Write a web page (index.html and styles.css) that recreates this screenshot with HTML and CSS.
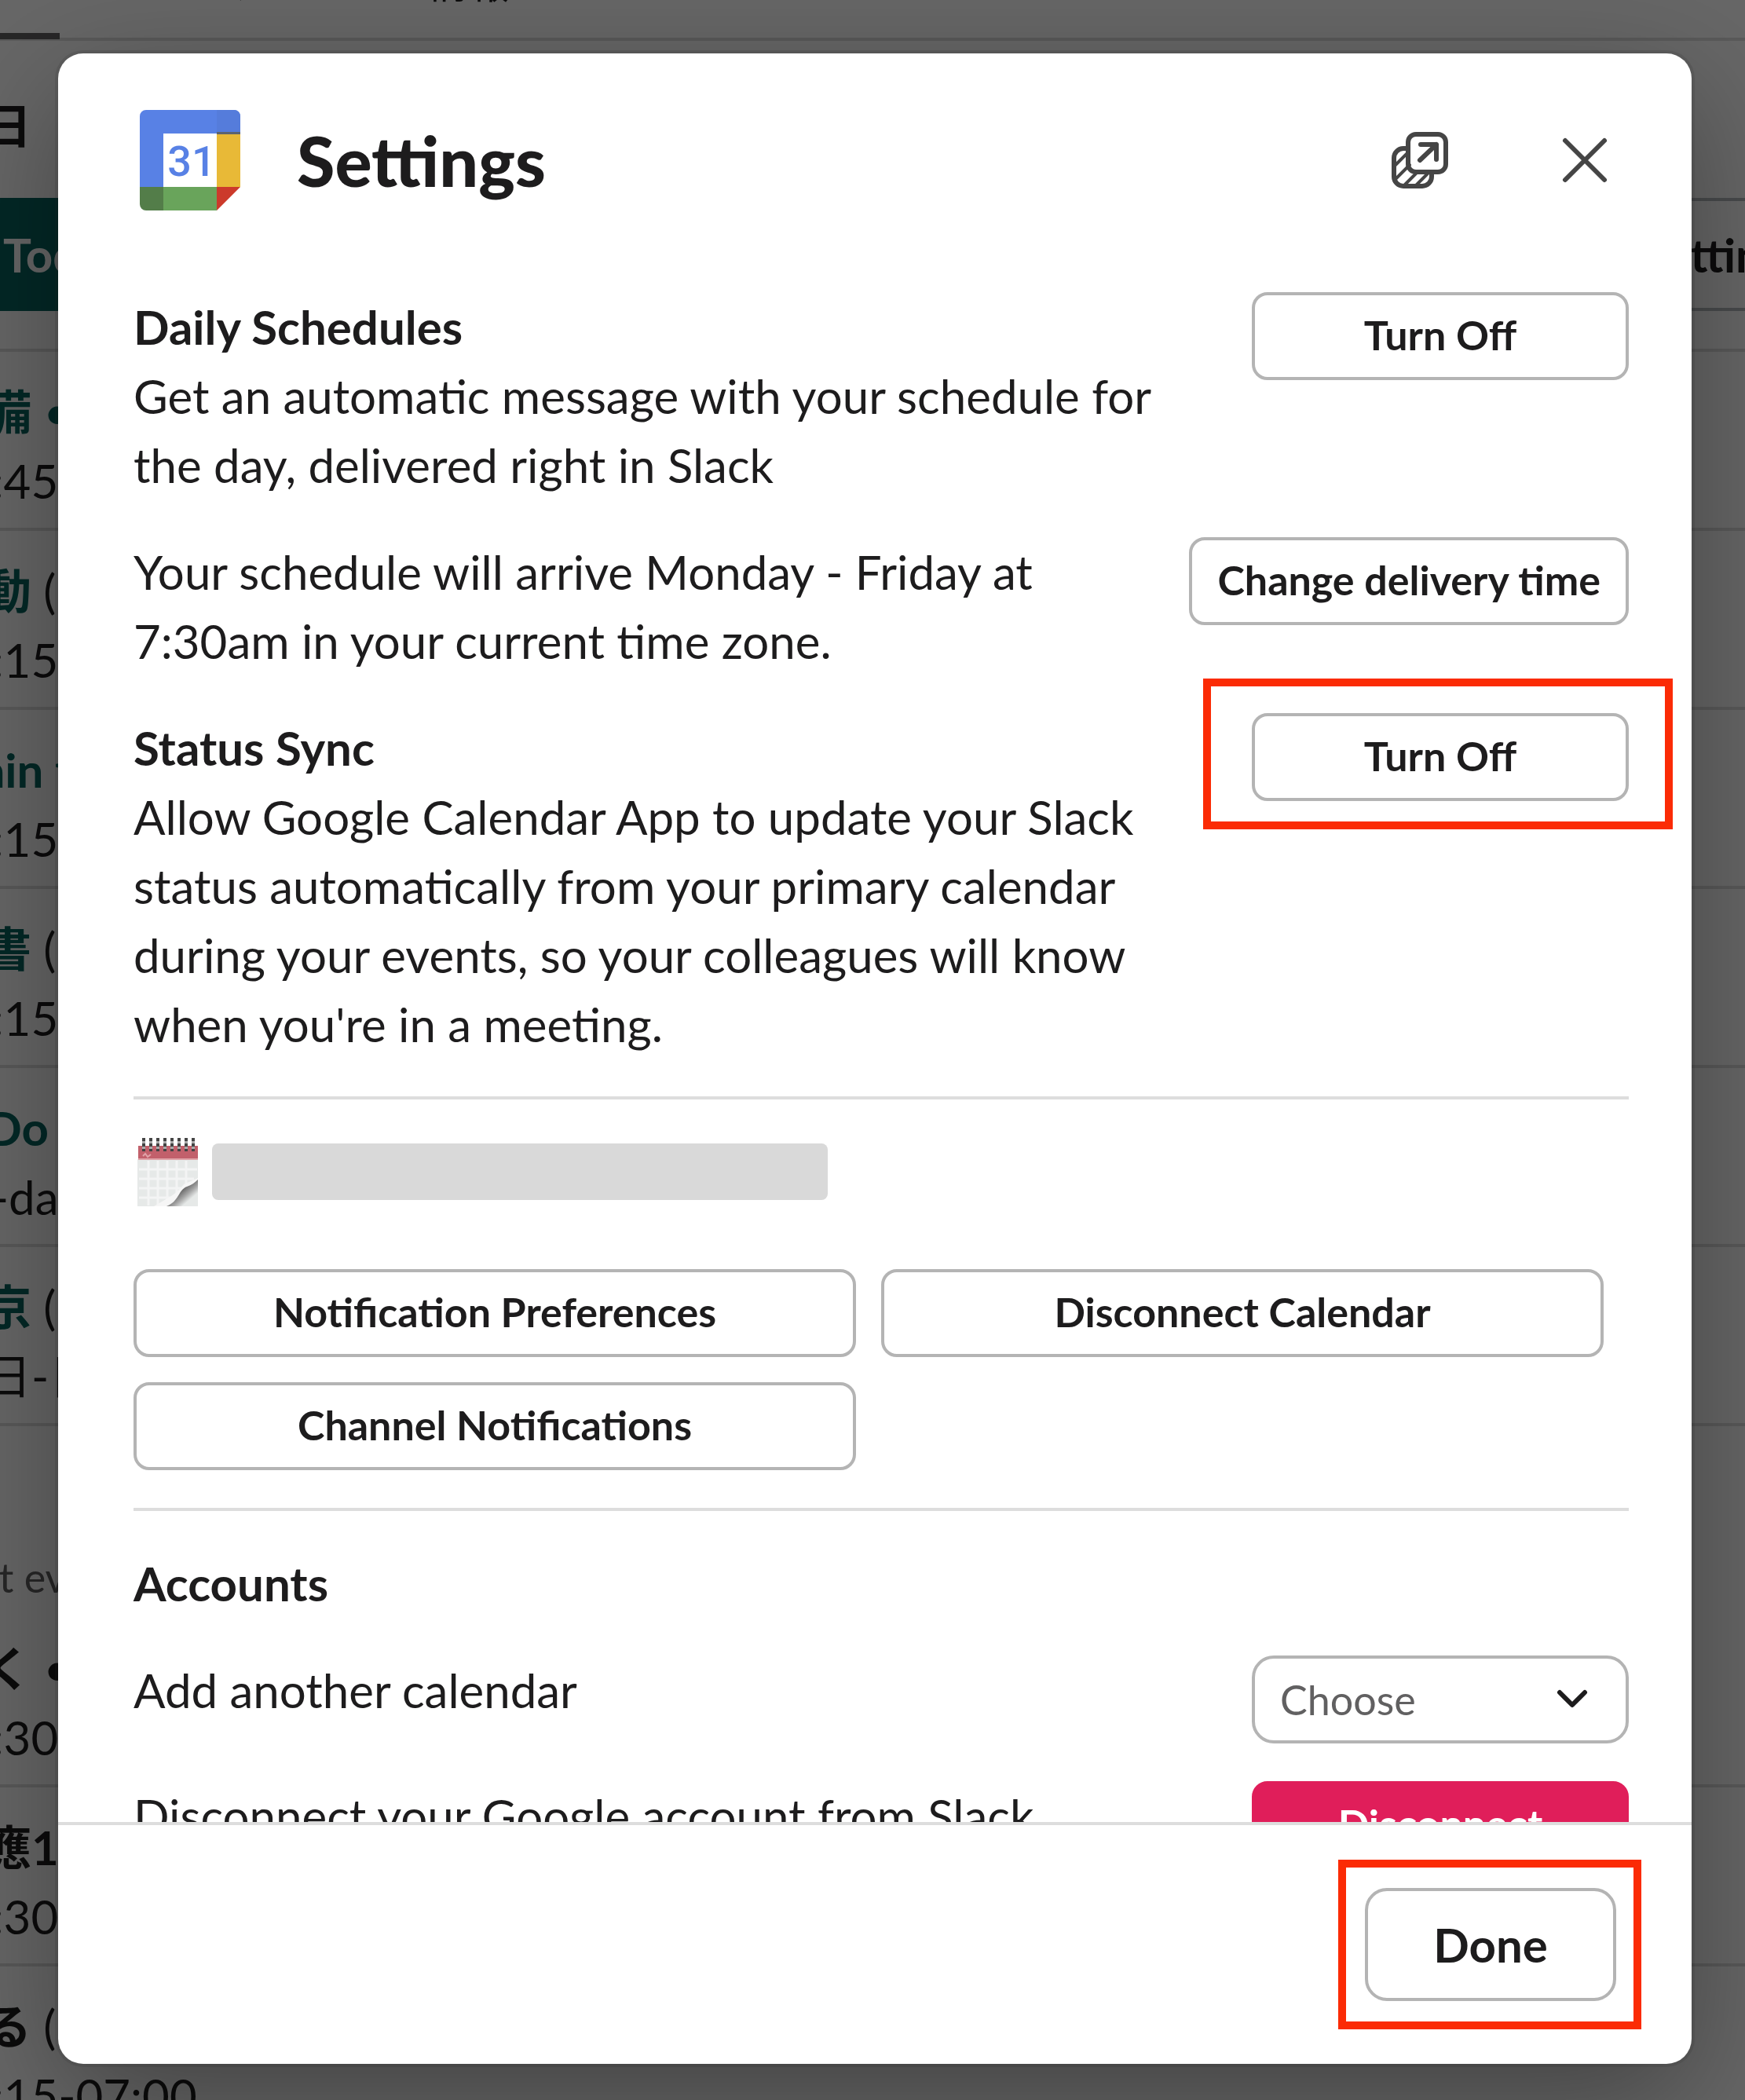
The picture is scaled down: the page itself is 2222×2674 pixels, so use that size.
FILE: index.html
```html
<!DOCTYPE html>
<html lang="en">
<head>
    <meta charset="UTF-8">
    <meta name="viewport" content="width=device-width, initial-scale=1.0">
    <title>Google Calendar Settings</title>
    <link rel="stylesheet" href="styles.css">
</head>

<body>
    <main class="page">
        <nav class="tabs"><span class="tab-home"></span><span>ワークスペース情報</span></nav>
        <h2 class="date">本日</h2>
        <div class="toolbar">
            <button class="today">Today</button>
            <button class="page-settings">Settings</button>
        </div>

        <ul class="events">
            <li><b class="link">準備</b><b class="link thin"> • </b><span>09:45</span></li>
            <li><b class="link">移動</b><b class="thin"> (</b><span>10:15</span></li>
            <li><b class="link">Main t</b><span>11:15</span></li>
            <li><b class="link">図書</b><b class="thin"> (</b><span>12:15</span></li>
            <li><b class="link">ToDo</b><span>All-day</span></li>
            <li><b class="link">東京</b><b class="thin"> (</b><span>本日-日</span></li>
        </ul>
        <p class="next">Past events</p>
        <ul class="events past">
            <li><b>行く</b><b class="thin"> • </b><span>08:30</span></li>
            <li><b>対應1</b><span>10:30</span></li>
            <li><b>ある</b><b class="thin"> (</b><span>06:15-07:00</span></li>
        </ul>
    </main>

    <div class="overlay">
        <section class="modal" role="dialog" aria-labelledby="title">
            <header class="modal-header">
                <svg class="logo" viewBox="0 0 128 128">
                    <path fill="#5881e5" d="M8 0h112a8 8 0 0 1 8 8v22H30v68H0V8a8 8 0 0 1 8-8z"/>
                    <path fill="#557cdb" d="M98 0h22a8 8 0 0 1 8 8v22H98z"/>
                    <path fill="#5c6370" d="M98 28h30v3H98z"/>
                    <path fill="#e8b937" d="M98 31h30v67H98z"/>
                    <path fill="#69a45b" d="M30 98h68v30H30z"/>
                    <path fill="#537d49" d="M0 98h30v30H8a8 8 0 0 1-8-8z"/>
                    <path fill="#cc3a2b" d="M98 98h30l-30 30z"/>
                    <text x="66" y="84" text-anchor="middle">31</text>
                </svg>
                <h1 id="title">Settings</h1>
                <div class="header-actions">
                    <button class="icon-button" aria-label="Open in new window">
                        <svg viewBox="0 0 72 72">
                            <g fill="none" stroke="#454545" stroke-width="6" stroke-linecap="round" stroke-linejoin="round">
                                <path d="M18 21h-3A12 12 0 0 0 3 33v24a12 12 0 0 0 12 12h24a12 12 0 0 0 12-12v-3"/>
                                <rect x="21" y="3" width="48" height="48" rx="10"/>
                                <path d="M37 16h20v19M57 16L36 36"/>
                                <path stroke-width="4" d="M4 43l15-15M5 60l18-18M16 68l15-15M31 68l15-15"/>
                            </g>
                        </svg>
                    </button>
                    <button class="icon-button" aria-label="Close">
                        <svg viewBox="0 0 72 72">
                            <path d="M11 11l50 50M61 11L11 61" fill="none" stroke="#454545" stroke-width="6" stroke-linecap="round"/>
                        </svg>
                    </button>
                </div>
            </header>

            <div class="modal-body">
                <div class="row">
                    <p><b>Daily Schedules</b><br>Get an automatic message with your schedule for the day, delivered right in Slack</p>
                    <button class="btn">Turn Off</button>
                </div>
                <div class="row">
                    <p>Your schedule will arrive Monday - Friday at 7:30am in your current time zone.</p>
                    <button class="btn">Change delivery time</button>
                </div>
                <div class="row">
                    <p><b>Status Sync</b><br>Allow Google Calendar App to update your Slack status automatically from your primary calendar during your events, so your colleagues will know when you're in a meeting.</p>
                    <div class="marked">
                        <button class="btn">Turn Off</button>
                    </div>
                </div>

                <hr>

                <div class="calendar">
                    <svg class="calendar-icon" viewBox="0 0 80 88">
                        <defs>
                            <linearGradient id="curl" x1="0" y1="0" x2="1" y2="1">
                                <stop offset="0.4" stop-color="#5a5a5a"/>
                                <stop offset="0.6" stop-color="#a5a5a5"/>
                                <stop offset="0.75" stop-color="#e6e9e8"/>
                            </linearGradient>
                        </defs>
                        <path fill="#e6e9e8" d="M1 28h77v60H1z"/>
                        <path fill="none" stroke="#f3f4f4" stroke-width="3" d="M15 30v57M27 30v57M39 30v57M51 30v50M63 30v40M3 41h74M3 53h70M3 65h55M3 77h46"/>
                        <path fill="#f6f6f6" d="M22 88c12-8 26-12 38-28l18-8v10L42 88z"/>
                        <path fill="url(#curl)" d="M38 88c16-6 15-21 26-25 6-2 10-5 14-9v34z"/>
                        <path fill="#c2606b" d="M2 11h76v18H2z"/>
                        <path fill="none" stroke="#e0a3a8" stroke-width="2" d="M8 24l3-3 3 4 4-3M2 28h76"/>
                        <path fill="none" stroke="#aaa" stroke-width="4" d="M9 1v14M18 1v14M27 1v14M36 1v14M45 1v14M54 1v14M63 1v14M72 1v14"/>
                        <path fill="none" stroke="#444" stroke-width="4" stroke-dasharray="4 3" d="M9 1v17M18 1v17M27 1v17M36 1v17M45 1v17M54 1v17M63 1v17M72 1v17"/>
                    </svg>
                    <span class="calendar-name"></span>
                </div>
                <div class="calendar-actions">
                    <button class="btn">Notification Preferences</button>
                    <button class="btn">Disconnect Calendar</button>
                    <button class="btn">Channel Notifications</button>
                </div>

                <hr>

                <h3>Accounts</h3>
                <div class="row">
                    <p><label for="addCalendar">Add another calendar</label></p>
                    <div class="select-wrap">
                        <select id="addCalendar">
                            <option>Choose</option>
                        </select>
                        <svg class="chevron" viewBox="0 0 40 28">
                            <path d="M4 5l16 16L36 5" fill="none" stroke="#1d1c1d" stroke-width="6" stroke-linecap="round" stroke-linejoin="round"/>
                        </svg>
                    </div>
                </div>
                <div class="row">
                    <p>Disconnect your Google account from Slack</p>
                    <button class="btn danger">Disconnect</button>
                </div>
            </div>

            <footer class="modal-footer">
                <div class="marked done-mark">
                    <button class="btn done">Done</button>
                </div>
            </footer>
        </section>
    </div>
</body>
</html>
```

FILE: styles.css
```css
* {
    box-sizing: border-box;
}

body {
    margin: 0;
    height: 100vh;
    overflow: hidden;
    font-family: Lato, "Noto Sans CJK JP", sans-serif;
    font-size: 60px;
    line-height: 88px;
    color: #1d1c1d;
    background-color: white;
}

h1, h2, h3, p, ul {
    margin: 0;
    padding: 0;
}

button, select {
    font-family: inherit;
    color: inherit;
    cursor: pointer;
}

/* app home behind the dialog, scrolled sideways */
.page {
    height: 100vh;
    margin-left: -80px;
    overflow: hidden;
}

.tabs {
    display: flex;
    align-items: flex-end;
    gap: 112px;
    height: 52px;
    padding-bottom: 40px;
    border-bottom: 4px solid #ddd;
    font-size: 52px;
    line-height: 60px;
}

.tab-home {
    flex-shrink: 0;
    width: 156px;
    height: 8px;
    margin-bottom: -42px;
    background-color: #616061;
}

.date {
    margin: 64px 0 48px;
    font-size: 60px;
}

.toolbar {
    display: flex;
    justify-content: space-between;
    margin-bottom: 48px;
}

.toolbar button {
    height: 144px;
    padding: 0 60px;
    border: 4px solid #b4b9bd;
    border-radius: 16px;
    background-color: white;
    font-size: 60px;
    font-weight: bold;
}

.toolbar .today {
    padding: 0 80px;
    border-color: #07645f;
    background-color: #07645f;
    color: white;
}

.page-settings {
    margin-right: -144px;
}

.events {
    list-style: none;
}

.events li {
    height: 228px;
    padding: 32px 0 12px;
    border-top: 4px solid #ddd;
    white-space: pre;
}

.events li:last-child {
    height: 232px;
    border-bottom: 4px solid #ddd;
}

.events span {
    display: block;
}

.link {
    color: #07645f;
}

.thin {
    font-weight: normal;
}

.next {
    padding-top: 152px;
    font-size: 52px;
    line-height: 80px;
    color: #616061;
}

.past li:first-child {
    height: 224px;
    border-top: none;
}

/* dialog */
.overlay {
    position: fixed;
    inset: 0;
    display: flex;
    padding: 68px 68px 46px 74px;
    background-color: rgba(0, 0, 0, 0.6);
}

.modal {
    flex: 1;
    display: flex;
    flex-direction: column;
    min-width: 0;
    overflow: hidden;
    border-radius: 32px;
    background-color: white;
    box-shadow: 0 0 0 4px rgba(29, 28, 29, 0.13), 0 48px 160px rgba(0, 0, 0, 0.35);
}

.modal-header {
    display: flex;
    align-items: center;
    gap: 72px;
    padding: 72px 100px 104px 104px;
}

.logo {
    width: 128px;
    height: 128px;
}

.logo text {
    font-family: Roboto, sans-serif;
    font-size: 54px;
    font-weight: 500;
    fill: #5881e5;
}

.modal-header h1 {
    font-size: 88px;
    font-weight: 900;
}

.header-actions {
    display: flex;
    gap: 138px;
    margin-left: auto;
}

.icon-button {
    width: 72px;
    height: 72px;
    padding: 0;
    border: none;
    background: none;
}

.icon-button svg {
    display: block;
}

.modal-body {
    flex: 1;
    min-height: 0;
    overflow: hidden;
    padding: 0 80px 0 96px;
}

.row {
    display: flex;
    justify-content: space-between;
    align-items: flex-start;
    margin-bottom: 48px;
}

.row p {
    max-width: 1320px;
}

.btn {
    min-width: 480px;
    height: 112px;
    padding: 0 32px 4px;
    border: 4px solid #b4b4b4;
    border-radius: 20px;
    background-color: white;
    font-size: 52px;
    font-weight: bold;
    white-space: nowrap;
}

.danger {
    border-color: #e01e5a;
    background-color: #e01e5a;
    color: white;
}

/* red frame drawn around a button */
.marked {
    position: relative;
    display: flex;
}

.marked::after {
    content: "";
    position: absolute;
    inset: -44px -56px -36px -62px;
    border: 10px solid #fb2b05;
    pointer-events: none;
}

hr {
    margin: 0;
    border: none;
    border-top: 4px solid #ddd;
}

.calendar {
    display: flex;
    align-items: center;
    gap: 16px;
    padding: 48px 0 80px 4px;
}

.calendar-icon {
    width: 80px;
    height: 88px;
}

.calendar-name {
    width: 784px;
    height: 72px;
    border-radius: 8px;
    background-color: #d9d9d9;
}

.calendar-actions {
    display: grid;
    grid-template-columns: 1fr 1fr;
    gap: 32px;
    padding-right: 32px;
    margin-bottom: 48px;
}

h3 {
    margin: 48px 0;
    font-size: 60px;
}

.select-wrap {
    position: relative;
    width: 480px;
}

.select-wrap select {
    display: block;
    width: 100%;
    height: 112px;
    padding: 0 32px;
    border: 4px solid #b4b4b4;
    border-radius: 28px;
    background-color: white;
    font-size: 52px;
    color: #616061;
    appearance: none;
}

.chevron {
    position: absolute;
    right: 52px;
    top: 42px;
    width: 40px;
    height: 28px;
    pointer-events: none;
}

.modal-footer {
    display: flex;
    justify-content: flex-end;
    padding: 80px 96px;
    border-top: 4px solid #ddd;
}

.done {
    min-width: 320px;
    height: 144px;
    padding-bottom: 0;
    border-radius: 28px;
    font-size: 60px;
}

.done-mark::after {
    inset: -36px -32px -36px -34px;
}
```
